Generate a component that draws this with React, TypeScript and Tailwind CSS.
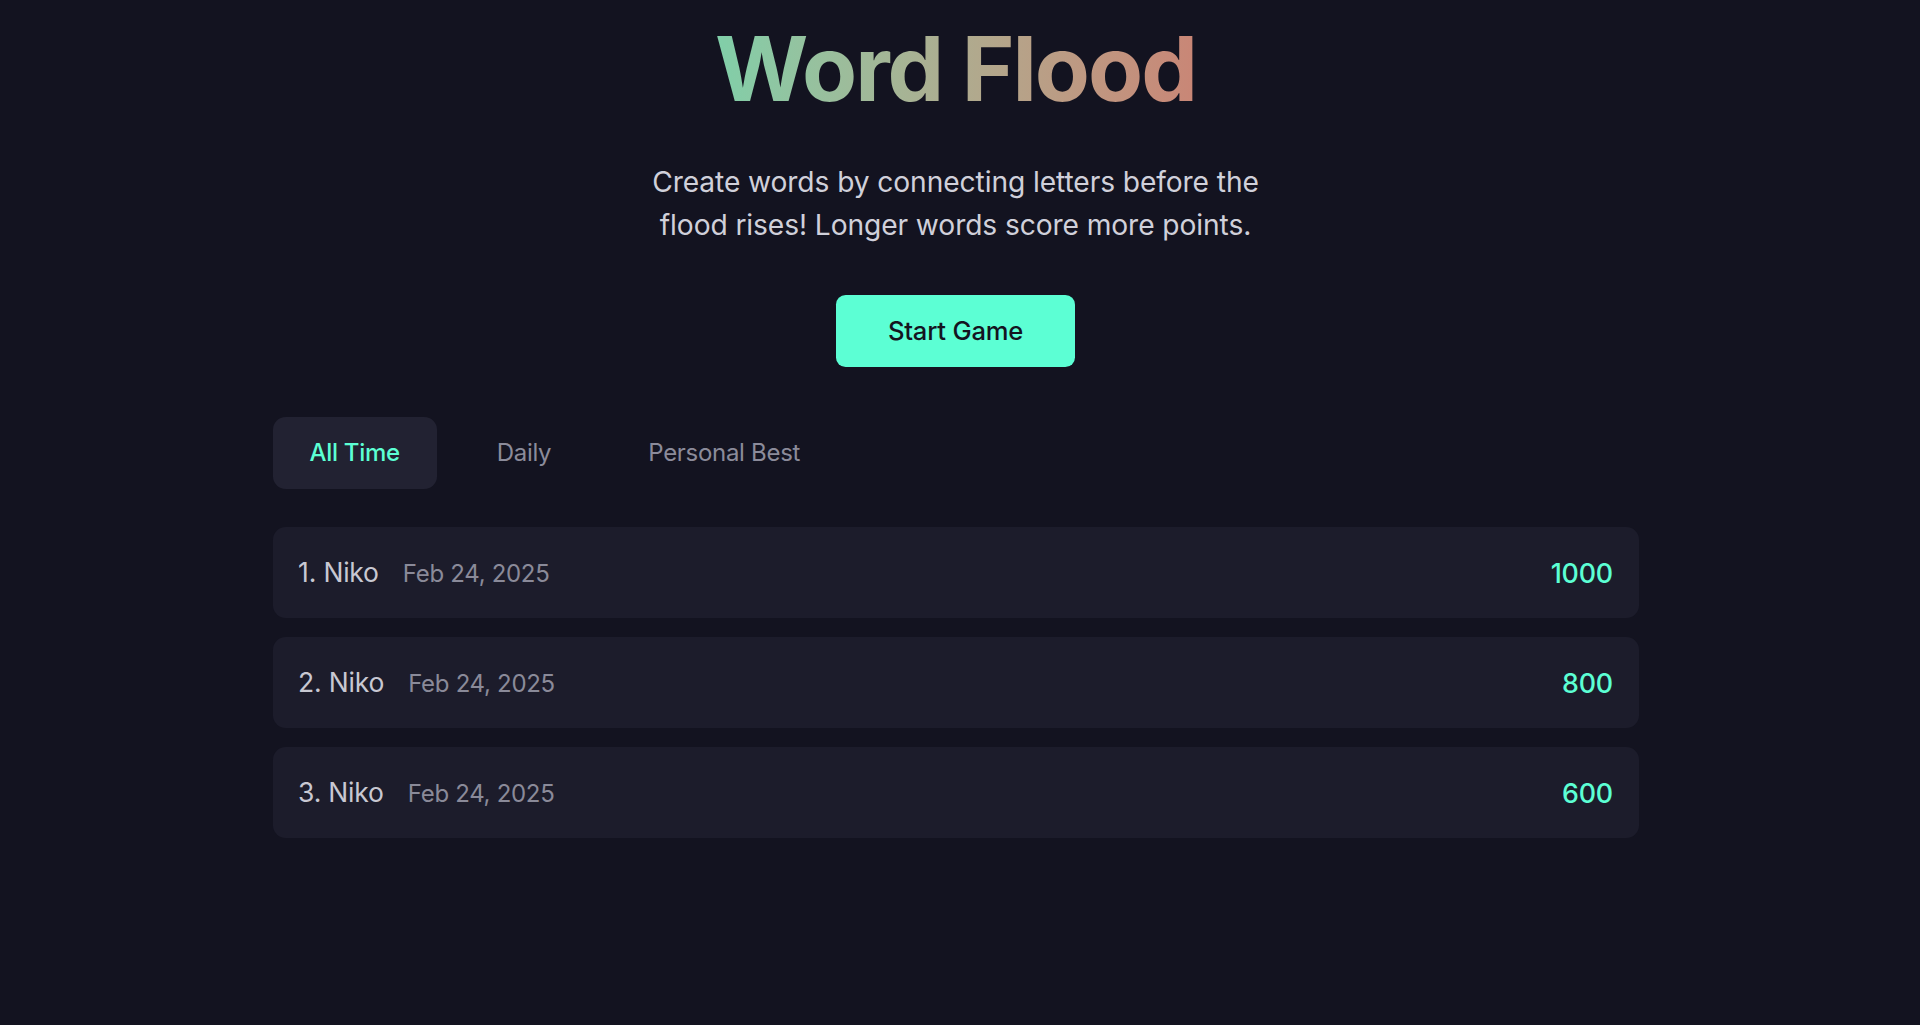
import React from "react";

const rows = [
  { rank: 1, name: "Niko", date: "Feb 24, 2025", score: 1000 },
  { rank: 2, name: "Niko", date: "Feb 24, 2025", score: 800 },
  { rank: 3, name: "Niko", date: "Feb 24, 2025", score: 600 },
];

export default function App() {
  return (
    <div
      className="min-h-screen w-full bg-[#131320] pr-[9px]"
      style={{ fontFamily: "Inter, 'Noto Sans', sans-serif" }}
    >
      <div className="flex flex-col items-center">
        <h1 className="mt-[24px] inline-block bg-linear-to-r from-[#80cfa9] to-[#c98676] bg-clip-text text-[90px] font-bold leading-none tracking-[-2px] text-transparent">
          Word Flood
        </h1>
        <p className="mt-[47px] text-center text-[28.2px] leading-[43.2px] tracking-[-0.1px] text-[#d0d0da]">
          Create words by connecting letters before the
          <br />
          flood rises! Longer words score more points.
        </p>
        <button className="mt-[48px] flex h-[72px] w-[239px] items-center justify-center rounded-[9.6px] bg-[#5cffd4] text-[25.6px] font-medium tracking-[-0.2px] text-[#14141f]">
          Start Game
        </button>
        <div className="mt-[50px] w-[1366px]">
          <div className="flex gap-[23px]">
            <div className="flex h-[72px] items-center rounded-[12.8px] bg-[#222232] px-[37px] text-[24px] font-medium tracking-[-0.3px] text-[#5cffd4]">
              All Time
            </div>
            <div className="flex h-[72px] items-center rounded-[12.8px] px-[37px] text-[24px] tracking-[-0.3px] text-[#8b8b9a]">
              Daily
            </div>
            <div className="flex h-[72px] items-center rounded-[12.8px] px-[37px] text-[24px] tracking-[-0.3px] text-[#8b8b9a]">
              Personal Best
            </div>
          </div>
          <div className="mt-[38px] flex flex-col gap-[19px]">
            {rows.map((r) => (
              <div
                key={r.rank}
                className="flex h-[91px] items-center justify-between rounded-[12.8px] bg-[#1c1c2b] px-[25.6px]"
              >
                <div className="flex items-baseline">
                  <span className="text-[26.5px] tracking-[-0.2px] text-[#c8c8d2]">
                    {r.rank}. {r.name}
                  </span>
                  <span className="ml-[24px] text-[24px] tracking-[-0.3px] text-[#8a8a99]">
                    {r.date}
                  </span>
                </div>
                <span className="text-[26.8px] font-medium tracking-[-0.2px] text-[#5cffd4]">
                  {r.score}
                </span>
              </div>
            ))}
          </div>
        </div>
      </div>
    </div>
  );
}
